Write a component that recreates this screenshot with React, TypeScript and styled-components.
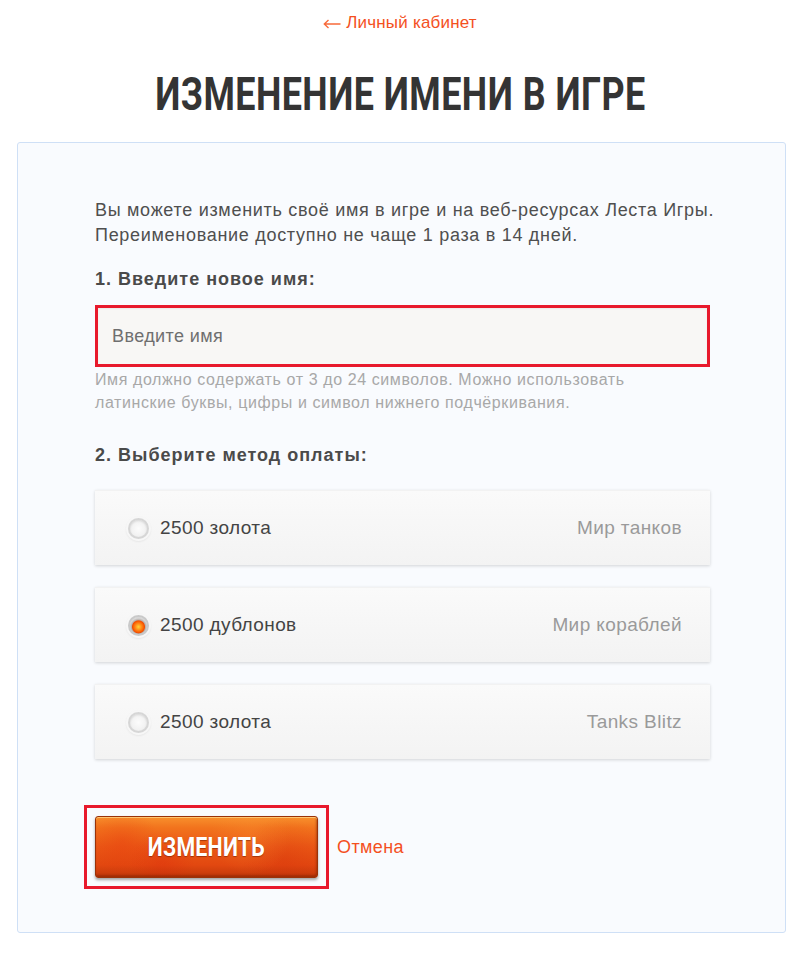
import React, { useState } from 'react';
import styled, { createGlobalStyle } from 'styled-components';

const GlobalStyle = createGlobalStyle`
  body {
    margin: 0;
    background: #ffffff;
    font-family: "Liberation Sans", Arial, sans-serif;
  }
`;

const Page = styled.div`
  width: 800px;
  padding: 12px 0 18px;
  box-sizing: border-box;
  display: flex;
  flex-direction: column;
  align-items: center;
`;

const BackLink = styled.a`
  display: flex;
  align-items: center;
  gap: 5px;
  color: #f4501e;
  font-size: 17px;
  line-height: 22px;
  letter-spacing: 0.2px;
  text-decoration: none;
`;

const ArrowIcon = styled.svg`
  width: 18px;
  height: 10px;
  margin-top: 2px;
  color: #f86a3a;
`;

const Title = styled.h1`
  margin: 36px 0 24px;
  font-family: Roboto, "Liberation Sans", sans-serif;
  font-weight: 700;
  font-size: 46px;
  line-height: 48px;
  color: #343434;
  letter-spacing: 0.6px;
  transform: scaleX(0.78);
  white-space: nowrap;
`;

const Panel = styled.section`
  align-self: stretch;
  margin: 0 14px 0 17px;
  background: #f9fbfe;
  border: 1px solid #cfe0f6;
  border-radius: 3px;
  padding: 55px 75px 43px 77px;
  display: flex;
  flex-direction: column;
`;

const Intro = styled.p`
  margin: 0;
  font-size: 18px;
  line-height: 25px;
  letter-spacing: 0.7px;
  color: #4f4f4f;
  white-space: nowrap;
`;

const StepLabel = styled.h2<{ $top: number }>`
  margin: ${p => p.$top}px 0 0;
  font-size: 18px;
  line-height: 22px;
  letter-spacing: 1px;
  font-weight: 700;
  color: #4a4a4a;
`;

const Highlight = styled.div`
  margin-top: 15px;
  border: 3px solid #e8192c;
  display: flex;
`;

const NameInput = styled.input`
  flex: 1;
  height: 56px;
  border: none;
  background: #f8f7f5;
  box-shadow: inset 0 1px 2px rgba(0, 0, 0, 0.06);
  padding: 0 14px;
  font-family: inherit;
  font-size: 18px;
  letter-spacing: 0.4px;
  color: #333;
  outline: none;
  &::placeholder {
    color: #6f6f6f;
  }
`;

const Hint = styled.p`
  margin: 1px 0 0;
  font-size: 16px;
  line-height: 23px;
  letter-spacing: 0.6px;
  color: #a8a8a8;
  white-space: nowrap;
`;

const Options = styled.div`
  margin-top: 24px;
  display: flex;
  flex-direction: column;
  gap: 22px;
`;

const OptionCard = styled.label`
  height: 74px;
  display: flex;
  align-items: center;
  padding: 0 28px 0 33px;
  background: linear-gradient(#fafafa, #f3f3f3);
  box-shadow: 0 1px 3px rgba(0, 0, 0, 0.16);
  border-top: 1px solid #f2f2f2;
  cursor: pointer;
`;

const Radio = styled.span<{ $checked: boolean }>`
  width: 21px;
  height: 21px;
  border-radius: 50%;
  box-sizing: border-box;
  border: 2px solid ${p => (p.$checked ? '#c9c9c9' : '#d6d6d6')};
  background: ${p =>
    p.$checked
      ? 'radial-gradient(circle at 50% 58%, #ffd23a 0, #ff7a10 4px, #f24e00 6px, #b9b2ae 7px, #e8e8e8 9px)'
      : 'radial-gradient(circle, #fcfcfc 0, #f1f1f1 8px)'};
  box-shadow: 0 0 0 2px #f7f7f7, 0 1px 2px 2px rgba(0, 0, 0, 0.06), inset 0 1px 2px rgba(0, 0, 0, 0.1);
`;

const Amount = styled.span`
  margin-left: 11px;
  font-size: 19px;
  letter-spacing: 0.4px;
  color: #444;
  flex: 1;
`;

const Game = styled.span`
  font-size: 19px;
  letter-spacing: 0.4px;
  color: #9a9a9a;
`;

const Actions = styled.div`
  margin-top: 46px;
  display: flex;
  align-items: center;
  gap: 8px;
  margin-left: -11px;
`;

const ButtonFrame = styled.div`
  border: 3px solid #e8192c;
  padding: 8px;
  display: flex;
`;

const SubmitButton = styled.button`
  width: 223px;
  height: 62px;
  border: 1px solid #9a3208;
  border-radius: 3px;
  background:
    radial-gradient(circle at 12% 40%, rgba(230, 40, 10, 0.25) 0, transparent 18%),
    radial-gradient(circle at 30% 75%, rgba(220, 30, 10, 0.25) 0, transparent 20%),
    radial-gradient(circle at 70% 30%, rgba(255, 160, 60, 0.2) 0, transparent 25%),
    radial-gradient(circle at 85% 70%, rgba(210, 40, 10, 0.25) 0, transparent 22%),
    linear-gradient(#f8902c 0%, #f2731d 18%, #ea5815 50%, #e24810 80%, #c2380a 100%);
  box-shadow: inset 0 1px 0 rgba(255, 210, 130, 0.8), inset -1px -2px 2px rgba(120, 30, 0, 0.45),
    0 2px 3px rgba(0, 0, 0, 0.35);
  color: #fff;
  font-family: Roboto, "Liberation Sans", sans-serif;
  font-weight: 700;
  font-size: 26px;
  letter-spacing: 0.3px;
  text-shadow: 0 1px 1px rgba(110, 25, 0, 0.55);
  cursor: pointer;
  display: flex;
  align-items: center;
  justify-content: center;
`;

const ButtonLabel = styled.span`
  display: inline-block;
  transform: scaleX(0.82);
`;

const CancelLink = styled.a`
  color: #f4501e;
  font-size: 18px;
  letter-spacing: 0.4px;
  text-decoration: none;
`;

const options = [
  { amount: '2500 золота', game: 'Мир танков' },
  { amount: '2500 дублонов', game: 'Мир кораблей' },
  { amount: '2500 золота', game: 'Tanks Blitz' },
];

export default function App() {
  const [selected, setSelected] = useState(1);
  return (
    <>
      <GlobalStyle />
      <Page>
        <BackLink href="#">
          <ArrowIcon viewBox="0 0 18 10" fill="none" stroke="currentColor" strokeWidth="1.4">
            <path d="M17.5 5H1.5M5.5 1L1.3 5l4.2 4" />
          </ArrowIcon>
          Личный кабинет
        </BackLink>
        <Title>ИЗМЕНЕНИЕ ИМЕНИ В ИГРЕ</Title>
        <Panel>
          <Intro>
            Вы можете изменить своё имя в игре и на веб-ресурсах Леста Игры.
            <br />
            Переименование доступно не чаще 1 раза в 14 дней.
          </Intro>
          <StepLabel $top={20}>1. Введите новое имя:</StepLabel>
          <Highlight>
            <NameInput placeholder="Введите имя" />
          </Highlight>
          <Hint>
            Имя должно содержать от 3 до 24 символов. Можно использовать
            <br />
            латинские буквы, цифры и символ нижнего подчёркивания.
          </Hint>
          <StepLabel $top={30}>2. Выберите метод оплаты:</StepLabel>
          <Options>
            {options.map((o, i) => (
              <OptionCard key={i} onClick={() => setSelected(i)}>
                <Radio $checked={selected === i} />
                <Amount>{o.amount}</Amount>
                <Game>{o.game}</Game>
              </OptionCard>
            ))}
          </Options>
          <Actions>
            <ButtonFrame>
              <SubmitButton>
                <ButtonLabel>ИЗМЕНИТЬ</ButtonLabel>
              </SubmitButton>
            </ButtonFrame>
            <CancelLink href="#">Отмена</CancelLink>
          </Actions>
        </Panel>
      </Page>
    </>
  );
}
